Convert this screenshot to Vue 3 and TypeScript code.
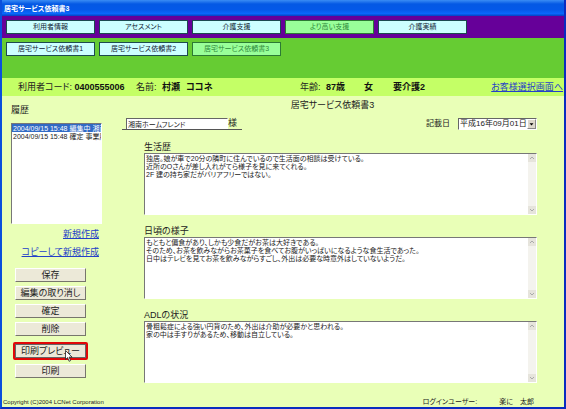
<script setup lang="ts">
import { ref } from 'vue'

interface Tab {
  label: string
  active?: boolean
}

interface Section {
  id: string
  label: string
  text: string
}

const mainTabs: Tab[] = [
  { label: '利用者情報' },
  { label: 'アセスメント' },
  { label: '介護支援' },
  { label: 'より高い支援', active: true },
  { label: '介護実績' },
]

const subTabs: Tab[] = [
  { label: '居宅サービス依頼書1' },
  { label: '居宅サービス依頼書2' },
  { label: '居宅サービス依頼書3', active: true },
]

const history = ['2004/09/15 15:48 編集中 湘南ホームフレンド', '2004/09/15 15:48 確定 事業所']
const selected = ref<string>(history[0])
const company = ref('湘南ホームフレンド')
const date = ref('平成16年09月01日')

const sections = ref<Section[]>([
  {
    id: 'life',
    label: '生活歴',
    text: '独居。娘が車で20分の隣町に住んでいるので生活面の相談は受けている。\n近所のOさんが差し入れがてら様子を見に来てくれる。\n2F 建の持ち家だがバリアフリーではない。',
  },
  {
    id: 'daily',
    label: '日頃の様子',
    text: 'もともと偏食があり、しかも少食だがお茶は大好きである。\nそのため、お茶を飲みながらお茶菓子を食べてお腹がいっぱいになるような食生活であった。\n日中はテレビを見てお茶を飲みながらすごし、外出は必要な時意外はしていないようだ。',
  },
  {
    id: 'adl',
    label: 'ADLの状況',
    text: '骨粗鬆症による強い円背のため、外出は介助が必要かと思われる。\n家の中は手すりがあるため、移動は自立している。',
  },
])
</script>

<template>
  <div class="window">
    <header class="titlebar">居宅サービス依頼書3</header>

    <nav class="tabs main-tabs">
      <button v-for="t in mainTabs" :key="t.label" type="button" class="tab" :class="{ active: t.active }">{{ t.label }}</button>
    </nav>
    <nav class="tabs sub-tabs">
      <button v-for="t in subTabs" :key="t.label" type="button" class="tab" :class="{ active: t.active }">{{ t.label }}</button>
    </nav>

    <div class="person">
      <span class="code">利用者コード: <b>0400555006</b></span>
      <span class="name">名前: <b>村瀬</b><b>ココネ</b></span>
      <span class="age">年齢: <b>87歳</b></span>
      <b class="sex">女</b>
      <b class="level">要介護2</b>
      <a href="#" class="back">お客様選択画面へ</a>
    </div>

    <div class="body">
      <aside class="side">
        <label for="history">履歴</label>
        <select id="history" v-model="selected" class="history" size="8">
          <option v-for="h in history" :key="h" :value="h">{{ h }}</option>
        </select>
        <div class="links">
          <a href="#">新規作成</a>
          <a href="#">コピーして新規作成</a>
        </div>
        <div class="actions">
          <button type="button" class="btn">保存</button>
          <button type="button" class="btn">編集の取り消し</button>
          <button type="button" class="btn">確定</button>
          <button type="button" class="btn">削除</button>
          <div class="highlight">
            <button type="button" class="btn preview">印刷プレビュー</button>
            <svg class="cursor" viewBox="0 0 8 12" aria-hidden="true">
              <path d="M.5.5v9l2.1-1.9 1.5 3.7 1.5-.7-1.5-3.5h3z" fill="#fff" stroke="#222" stroke-width=".8" />
            </svg>
          </div>
          <button type="button" class="btn">印刷</button>
        </div>
      </aside>

      <main class="main">
        <h1>居宅サービス依頼書3</h1>
        <div class="meta">
          <div class="company">
            <input id="company" v-model="company" type="text" />
            <label for="company">様</label>
          </div>
          <div class="date">
            <label for="date">記載日</label>
            <div class="picker">
              <select id="date" v-model="date">
                <option>平成16年09月01日</option>
              </select>
              <svg class="drop" viewBox="0 0 9 9" aria-hidden="true">
                <path d="M2 3.500h5L4.500 6.500z" fill="#000" />
              </svg>
            </div>
          </div>
        </div>

        <section v-for="s in sections" :key="s.id" class="section">
          <label :for="s.id">{{ s.label }}</label>
          <div class="memo">
            <textarea :id="s.id" v-model="s.text"></textarea>
            <div class="scroll" aria-hidden="true">
              <svg viewBox="0 0 8 8"><path d="M2 5l2-2 2 2" /></svg>
              <svg viewBox="0 0 8 8"><path d="M2 3l2 2 2-2" /></svg>
            </div>
          </div>
        </section>
      </main>
    </div>

    <footer class="footer">
      <small>Copyright (C)2004 LCNet Corporation</small>
      <span class="login"><span>ログインユーザー:</span><span>楽に　太郎</span></span>
    </footer>
  </div>
</template>

<style>
body {
  margin: 0;
}
</style>

<style scoped>
.window,
.window * {
  box-sizing: border-box;
}
.window {
  display: flex;
  flex-direction: column;
  min-height: 100vh;
  border: solid #0a2cc0;
  border-width: 0 2px 2px;
  border-left-color: #0a50dc;
  background: #e9ffb7;
  color: #222;
  font: 9px/12px 'Liberation Sans', 'Noto Sans CJK JP', sans-serif;
  font-feature-settings: 'palt';
}
button,
input,
select,
textarea {
  margin: 0;
  font: inherit;
  font-feature-settings: inherit;
  color: inherit;
  border-radius: 0;
}
a {
  color: #2440c8;
  text-decoration: underline;
}
.titlebar {
  height: 16px;
  padding-left: 2px;
  background: linear-gradient(#3a8cf4, #0458e4 25%, #0458e8 60%, #0868fc 85%, #0440c0);
  color: #fff;
  font-size: 7px;
  font-weight: bold;
  line-height: 18px;
}
.tabs {
  display: flex;
  gap: 4px;
  padding: 4px;
}
.main-tabs {
  height: 22px;
  background: #660099;
}
.sub-tabs {
  height: 40px;
  background: #66cc33;
}
.tab {
  width: 89px;
  height: 14px;
  padding: 0;
  border: 1px solid #1c4a50;
  background: #ccffff;
  color: #123;
  font-size: 7px;
  line-height: 12px;
}
.tab.active {
  border-color: #2c7a34;
  background: #99ff99;
  color: #2f8a3c;
}
.person {
  display: grid;
  grid-template-columns: 118px 164px 64px 29px 1fr auto;
  align-items: center;
  height: 18px;
  padding: 0 1px 0 16px;
  background: #c4ff66;
  white-space: nowrap;
}
.person b {
  color: #111;
}
.name b,
.age b {
  margin-left: 3px;
}
.name b + b {
  margin-left: 6px;
}
.body {
  flex: 1;
  display: flex;
}
.side {
  display: flex;
  flex-direction: column;
  width: 120px;
  padding: 8px 20px 0 9px;
}
.history {
  width: 91px;
  height: 101px;
  margin-top: 7px;
  padding: 0;
  border: 1px solid #fff;
  border-top-color: #777;
  border-left-color: #777;
  background: #fff;
  overflow: hidden;
  font-size: 7px;
}
.history option {
  display: flex;
  align-items: center;
  height: 8px;
  min-height: 0;
  padding: 0 1px;
  line-height: 8px;
  overflow: visible;
}
.history option:checked {
  background: linear-gradient(#316ac5, #316ac5);
  color: #fff;
  -webkit-text-fill-color: #fff;
}
.links {
  display: flex;
  flex-direction: column;
  align-items: flex-end;
  gap: 6px;
  padding: 4px 3px 10px 0;
}
.actions {
  display: flex;
  flex-direction: column;
  align-items: center;
  gap: 4px;
  width: 79px;
}
.btn {
  width: 71px;
  height: 14px;
  padding: 0;
  border: 1px solid;
  border-color: #fff #77766c #77766c #fff;
  background: #ece9d8;
  line-height: 12px;
}
.highlight {
  position: relative;
  margin-top: 2px;
  border: 2px solid #e00808;
  border-radius: 2px;
}
.preview {
  display: block;
  border-color: #666;
}
.cursor {
  position: absolute;
  left: 50px;
  top: 6px;
  width: 8px;
  height: 12px;
}
.main {
  flex: 1;
  display: flex;
  flex-direction: column;
  padding: 3px 27px 0 22px;
}
h1 {
  margin: 0 16px 0 0;
  font-size: 9px;
  font-weight: normal;
  text-align: center;
}
.meta {
  display: flex;
  justify-content: space-between;
  margin: 7px 0 11px -22px;
}
.company {
  display: flex;
  width: 120px;
  padding-left: 4px;
  border-bottom: 1px solid #555;
}
.company input {
  width: 102px;
  height: 11px;
  padding: 0 1px;
  border: 1px solid #fff;
  border-top-color: #666;
  border-left-color: #666;
  border-bottom: 0;
  background: #fff;
  font-size: 7px;
  line-height: 10px;
}
.company label {
  line-height: 11px;
}
.date {
  display: flex;
  gap: 8px;
  font-size: 8px;
}
.picker {
  position: relative;
  width: 79px;
  height: 12px;
}
.picker select {
  display: block;
  width: 100%;
  height: 12px;
  padding: 0 9px 0 1px;
  appearance: none;
  border: 1px solid #fff;
  border-top-color: #666;
  border-left-color: #666;
  background: #fff;
  line-height: 10px;
}
.drop {
  position: absolute;
  right: 1px;
  top: 1px;
  width: 9px;
  height: 10px;
  border: 1px solid;
  border-color: #fff #888 #888 #fff;
  background: #ddd8cc;
  pointer-events: none;
}
.section {
  display: flex;
  flex-direction: column;
  margin-bottom: 10px;
}
.memo {
  display: flex;
  height: 62px;
  border: 1px solid #fff;
  border-top-color: #777;
  border-left-color: #777;
  background: #fff;
}
.memo textarea {
  flex: 1;
  padding: 1px;
  border: 0;
  background: transparent;
  resize: none;
  overflow: hidden;
  font-size: 7px;
  line-height: 8px;
  outline: 0;
}
.scroll {
  display: flex;
  flex-direction: column;
  justify-content: space-between;
  width: 8px;
  background: #f4f3ee;
}
.scroll svg {
  width: 8px;
  height: 8px;
  background: #e6e4dc;
  fill: none;
  stroke: #aaa;
}
.footer {
  display: flex;
  justify-content: space-between;
  align-items: center;
  height: 10px;
  padding: 0 30px 0 1px;
  font-size: 7px;
  line-height: 10px;
}
.footer small {
  font-size: 6px;
}
.login {
  display: flex;
  gap: 22px;
}
</style>
